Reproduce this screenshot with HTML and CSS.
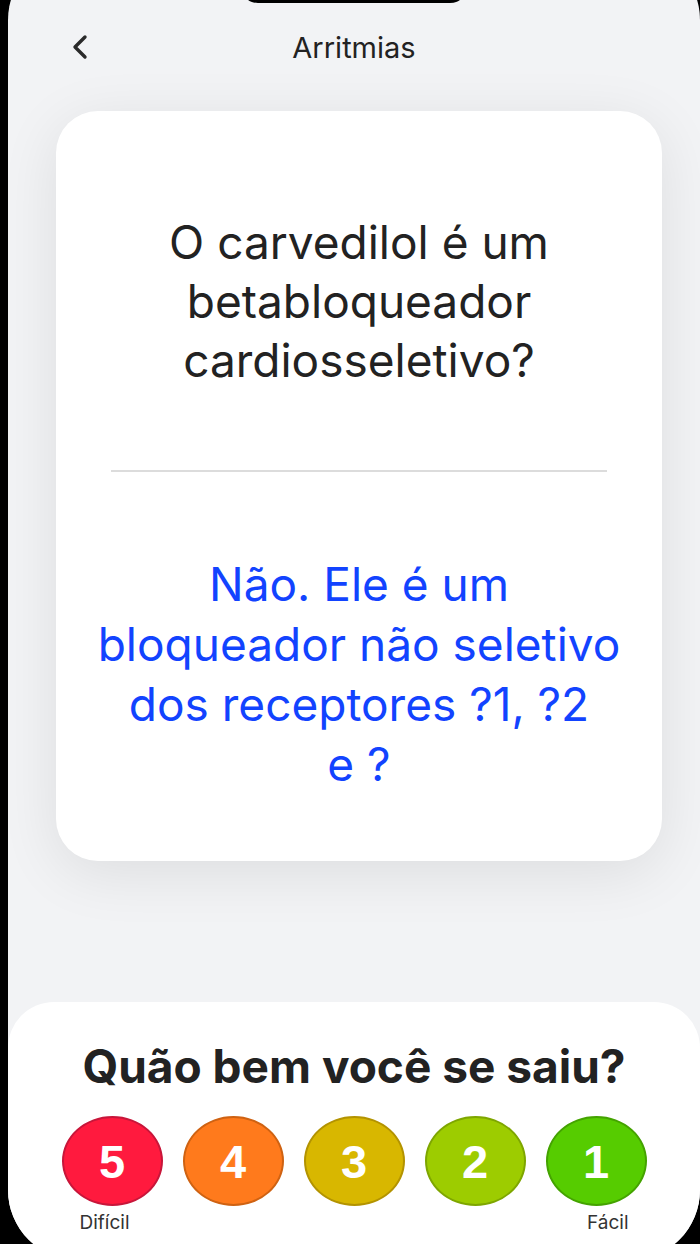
FILE: index.html
```html
<!DOCTYPE html>
<html lang="pt">
<head>
    <meta charset="utf-8">
    <title>Arritmias</title>
    <link rel="stylesheet" href="styles.css">
</head>
<body>
    <div class="screen">
        <div class="notch"></div>

        <header class="topbar">
            <button class="back" aria-label="Voltar">
                <svg width="22" height="26" viewBox="0 0 22 26">
                    <polyline points="16,3 6,13 16,23" fill="none" stroke="#2a2a2a" stroke-width="3.4" stroke-linecap="round" stroke-linejoin="round"/>
                </svg>
            </button>
            <h1 class="title">Arritmias</h1>
        </header>

        <div class="card">
            <p class="question">O carvedilol é um<br>betabloqueador<br>cardiosseletivo?</p>
            <hr class="divider">
            <p class="answer">Não. Ele é um<br>bloqueador não seletivo<br>dos receptores ?1, ?2<br>e ?</p>
        </div>

        <div class="sheet">
            <h2 class="sheet-title">Quão bem você se saiu?</h2>
            <div class="scores">
                <button class="score s5">5</button>
                <button class="score s4">4</button>
                <button class="score s3">3</button>
                <button class="score s2">2</button>
                <button class="score s1">1</button>
            </div>
            <div class="labels">
                <span>Difícil</span>
                <span>Fácil</span>
            </div>
        </div>
    </div>
</body>
</html>
```

FILE: styles.css
```css
html, body {
    margin: 0;
    height: 100%;
}
body {
    background-color: black;
    overflow: hidden;
    font-family: Inter, "Noto Sans", sans-serif;
}
.screen {
    position: relative;
    margin: -50px 0 0 8px;
    width: 692px;
    height: 1310px;
    padding-top: 69px;
    box-sizing: border-box;
    border-radius: 70px;
    overflow: hidden;
    background-color: #f2f3f5;
    display: flex;
    flex-direction: column;
}
.notch {
    position: absolute;
    top: 0;
    left: 232px;
    width: 228px;
    height: 53px;
    background-color: black;
    border-radius: 0 0 18px 18px;
}
.topbar {
    height: 56px;
    display: flex;
    align-items: center;
    justify-content: center;
    position: relative;
}
.back {
    position: absolute;
    left: 61px;
    top: 15px;
    padding: 0;
    border: none;
    background: none;
}
.title {
    margin: 0;
    font-size: 29px;
    font-weight: 400;
    color: #222;
}

.card {
    margin: 36px 38px 0 48px;
    height: 750px;
    box-sizing: border-box;
    padding-top: 102px;
    background-color: white;
    border-radius: 42px;
    box-shadow: 0 12px 60px rgba(0, 0, 0, 0.09);
    text-align: center;
}
.question {
    margin: 0;
    font-size: 46px;
    line-height: 59px;
    color: #222;
}
.divider {
    margin: 80px 55px 0;
    border: none;
    height: 2px;
    background-color: #dcdcdc;
}
.answer {
    margin: 82px 0 0;
    font-size: 46px;
    line-height: 60px;
    color: #1243ff;
}

.sheet {
    margin-top: auto;
    background-color: white;
    border-radius: 46px 46px 0 0;
    padding: 40px 0 27px;
    display: flex;
    flex-direction: column;
    align-items: center;
}
.sheet-title {
    margin: 0;
    font-size: 46px;
    line-height: 48px;
    font-weight: 700;
    color: #222;
}
.scores {
    margin-top: 26px;
    display: flex;
    gap: 20px;
}
.score {
    width: 101px;
    height: 90px;
    border-radius: 50%;
    border: 2px solid;
    padding: 0;
    font-family: "Liberation Sans", Arial, sans-serif;
    font-size: 47px;
    font-weight: 700;
    color: white;
}
.s5 { background-color: #ff1a3e; border-color: #c8163a; }
.s4 { background-color: #ff7a1c; border-color: #cf6212; }
.s3 { background-color: #d8b700; border-color: #b39300; }
.s2 { background-color: #9dcc00; border-color: #7ea600; }
.s1 { background-color: #56cc00; border-color: #44a300; }

.labels {
    margin-top: 7px;
    width: 585px;
    box-sizing: border-box;
    padding: 0 18px;
    display: flex;
    justify-content: space-between;
    font-size: 19px;
    line-height: 20px;
    color: #333;
}
```
